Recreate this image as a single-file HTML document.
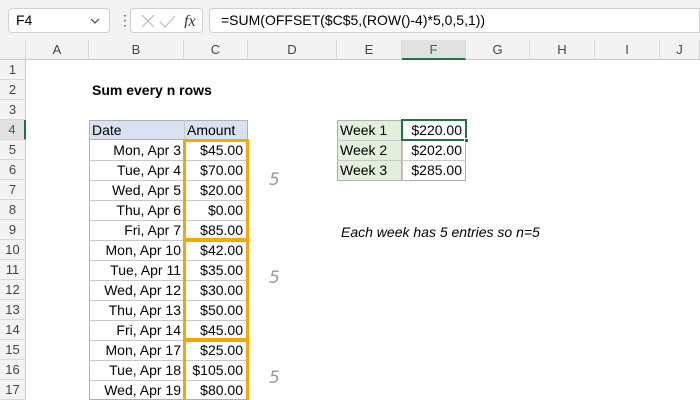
<!DOCTYPE html>
<html><head><style>
*{margin:0;padding:0;box-sizing:border-box}
html,body{width:700px;height:400px;overflow:hidden}
body{background:#fff;font-family:"Liberation Sans",sans-serif;font-size:14px;color:#000;position:relative}
.a{position:absolute}
.ch{position:absolute;top:40px;height:20px;background:#f3f3f3;border-right:1px solid #d8d8d8;border-bottom:1px solid #c8c8c8;text-align:center;line-height:20px;color:#444;font-size:13px}
.rh{position:absolute;left:0;width:26px;height:20px;background:#f3f3f3;border-bottom:1px solid #d8d8d8;border-right:1px solid #c8c8c8;text-align:center;line-height:20px;color:#444;font-size:13px}
.c{position:absolute;height:20px;line-height:20px;padding:0 3px;white-space:nowrap;overflow:hidden}
.r{text-align:right}
.five{position:absolute;color:#999;font-style:italic;font-size:17px;font-family:"DejaVu Sans",sans-serif;font-weight:200}
</style></head><body>
<div class="a" style="left:0;top:0;width:700px;height:40px;background:#f3f3f3"></div>
<div class="a" style="left:8px;top:8px;width:102px;height:25px;background:#fff;border:1px solid #d0d0d0;border-radius:4px;line-height:23px;padding-left:7px">F4<svg style="position:absolute;right:9px;top:9px" width="10" height="6"><path d="M1 1L5 5L9 1" stroke="#444" stroke-width="1.2" fill="none"/></svg></div>
<div class="a" style="left:118px;top:12px;color:#555;font-size:14px;line-height:16px">&#8942;</div>
<div class="a" style="left:130px;top:8px;width:73px;height:25px;background:#fff;border:1px solid #d0d0d0;border-radius:4px"></div>
<svg class="a" style="left:140px;top:14px" width="60" height="14"><path d="M2 1L14 13M14 1L2 13" stroke="#bbb" stroke-width="1.2"/><path d="M20 8L25 13L35 2" stroke="#bbb" stroke-width="1.2" fill="none"/><text x="44" y="12" font-family="Liberation Serif" font-style="italic" font-size="16" fill="#333">fx</text></svg>
<div class="a" style="left:209px;top:8px;width:491px;height:25px;background:#fff;border:1px solid #d0d0d0;border-radius:4px 0 0 4px;line-height:23px;padding-left:11px">=SUM(OFFSET($C$5,(ROW()-4)*5,0,5,1))</div>
<div class="ch" style="left:0;width:26px"></div>
<div class="ch" style="left:26px;width:63px">A</div>
<div class="ch" style="left:89px;width:95px">B</div>
<div class="ch" style="left:184px;width:64px">C</div>
<div class="ch" style="left:248px;width:89px">D</div>
<div class="ch" style="left:337px;width:65px">E</div>
<div class="ch" style="left:402px;width:64px;background:#e1e1e1;border-bottom:2px solid #217346;color:#217346">F</div>
<div class="ch" style="left:466px;width:64px">G</div>
<div class="ch" style="left:530px;width:65px">H</div>
<div class="ch" style="left:595px;width:65px">I</div>
<div class="ch" style="left:660px;width:40px">J</div>
<div class="rh" style="top:60px">1</div><div class="rh" style="top:80px">2</div><div class="rh" style="top:100px">3</div>
<div class="rh" style="top:120px;background:#e1e1e1;border-right:2px solid #217346;color:#217346">4</div>
<div class="rh" style="top:140px">5</div><div class="rh" style="top:160px">6</div><div class="rh" style="top:180px">7</div><div class="rh" style="top:200px">8</div><div class="rh" style="top:220px">9</div><div class="rh" style="top:240px">10</div><div class="rh" style="top:260px">11</div><div class="rh" style="top:280px">12</div><div class="rh" style="top:300px">13</div><div class="rh" style="top:320px">14</div><div class="rh" style="top:340px">15</div><div class="rh" style="top:360px">16</div><div class="rh" style="top:380px">17</div>

<div class="c" style="left:89px;top:80px;font-weight:bold">Sum every n rows</div>

<div class="a" style="left:89px;top:120px;width:159px;height:280px;border:1px solid #b0b0b0;background:#fff"></div>
<div class="a" style="left:89px;top:120px;width:159px;height:20px;background:#d9e1f2;border:1px solid #b0b0b0"></div>
<div class="a" style="left:184px;top:120px;width:1px;height:280px;background:#c8c8c8"></div>
<div class="c" style="left:89px;top:120px">Date</div><div class="c" style="left:184px;top:120px">Amount</div>
<div class="c r" style="left:89px;top:140px;width:95px">Mon, Apr 3</div><div class="c r" style="left:184px;top:140px;width:62px">$45.00</div>
<div class="c r" style="left:89px;top:160px;width:95px">Tue, Apr 4</div><div class="c r" style="left:184px;top:160px;width:62px">$70.00</div>
<div class="c r" style="left:89px;top:180px;width:95px">Wed, Apr 5</div><div class="c r" style="left:184px;top:180px;width:62px">$20.00</div>
<div class="c r" style="left:89px;top:200px;width:95px">Thu, Apr 6</div><div class="c r" style="left:184px;top:200px;width:62px">$0.00</div>
<div class="c r" style="left:89px;top:220px;width:95px">Fri, Apr 7</div><div class="c r" style="left:184px;top:220px;width:62px">$85.00</div>
<div class="c r" style="left:89px;top:240px;width:95px">Mon, Apr 10</div><div class="c r" style="left:184px;top:240px;width:62px">$42.00</div>
<div class="c r" style="left:89px;top:260px;width:95px">Tue, Apr 11</div><div class="c r" style="left:184px;top:260px;width:62px">$35.00</div>
<div class="c r" style="left:89px;top:280px;width:95px">Wed, Apr 12</div><div class="c r" style="left:184px;top:280px;width:62px">$30.00</div>
<div class="c r" style="left:89px;top:300px;width:95px">Thu, Apr 13</div><div class="c r" style="left:184px;top:300px;width:62px">$50.00</div>
<div class="c r" style="left:89px;top:320px;width:95px">Fri, Apr 14</div><div class="c r" style="left:184px;top:320px;width:62px">$45.00</div>
<div class="c r" style="left:89px;top:340px;width:95px">Mon, Apr 17</div><div class="c r" style="left:184px;top:340px;width:62px">$25.00</div>
<div class="c r" style="left:89px;top:360px;width:95px">Tue, Apr 18</div><div class="c r" style="left:184px;top:360px;width:62px">$105.00</div>
<div class="c r" style="left:89px;top:380px;width:95px">Wed, Apr 19</div><div class="c r" style="left:184px;top:380px;width:62px">$80.00</div>
<div class="a" style="left:89px;top:160px;width:159px;height:1px;background:#c8c8c8;box-shadow:0 20px #c8c8c8,0 40px #c8c8c8,0 60px #c8c8c8,0 80px #c8c8c8,0 100px #c8c8c8,0 120px #c8c8c8,0 140px #c8c8c8,0 160px #c8c8c8,0 180px #c8c8c8,0 200px #c8c8c8,0 220px #c8c8c8"></div>
<div class="a" style="left:183px;top:139px;width:66px;height:102px;border:3px solid #f5a800"></div>
<div class="a" style="left:183px;top:239px;width:66px;height:102px;border:3px solid #f5a800"></div>
<div class="a" style="left:183px;top:339px;width:66px;height:70px;border:3px solid #f5a800"></div>
<div class="five" style="left:269px;top:170px">5</div>
<div class="five" style="left:269px;top:268px">5</div>
<div class="five" style="left:269px;top:368px">5</div>

<div class="a" style="left:337px;top:120px;width:65px;height:61px;background:#e2efda;border:1px solid #b0b0b0"></div>
<div class="a" style="left:402px;top:120px;width:64px;height:61px;border:1px solid #b0b0b0;border-left:none"></div>
<div class="a" style="left:337px;top:140px;width:129px;height:1px;background:#c8c8c8;box-shadow:0 20px #c8c8c8"></div>
<div class="a" style="left:402px;top:120px;width:1px;height:61px;background:#c8c8c8"></div>
<div class="c" style="left:337px;top:120px">Week 1</div><div class="c r" style="left:402px;top:120px;width:63px">$220.00</div>
<div class="c" style="left:337px;top:140px">Week 2</div><div class="c r" style="left:402px;top:140px;width:63px">$202.00</div>
<div class="c" style="left:337px;top:160px">Week 3</div><div class="c r" style="left:402px;top:160px;width:63px">$285.00</div>
<div class="a" style="left:401px;top:119px;width:66px;height:22px;border:2px solid #217346"></div>
<div class="a" style="left:464px;top:138px;width:5px;height:5px;background:#217346;border:1px solid #fff"></div>

<div class="c" style="left:338px;top:222px;font-style:italic">Each week has 5 entries so n=5</div>
</body></html>
